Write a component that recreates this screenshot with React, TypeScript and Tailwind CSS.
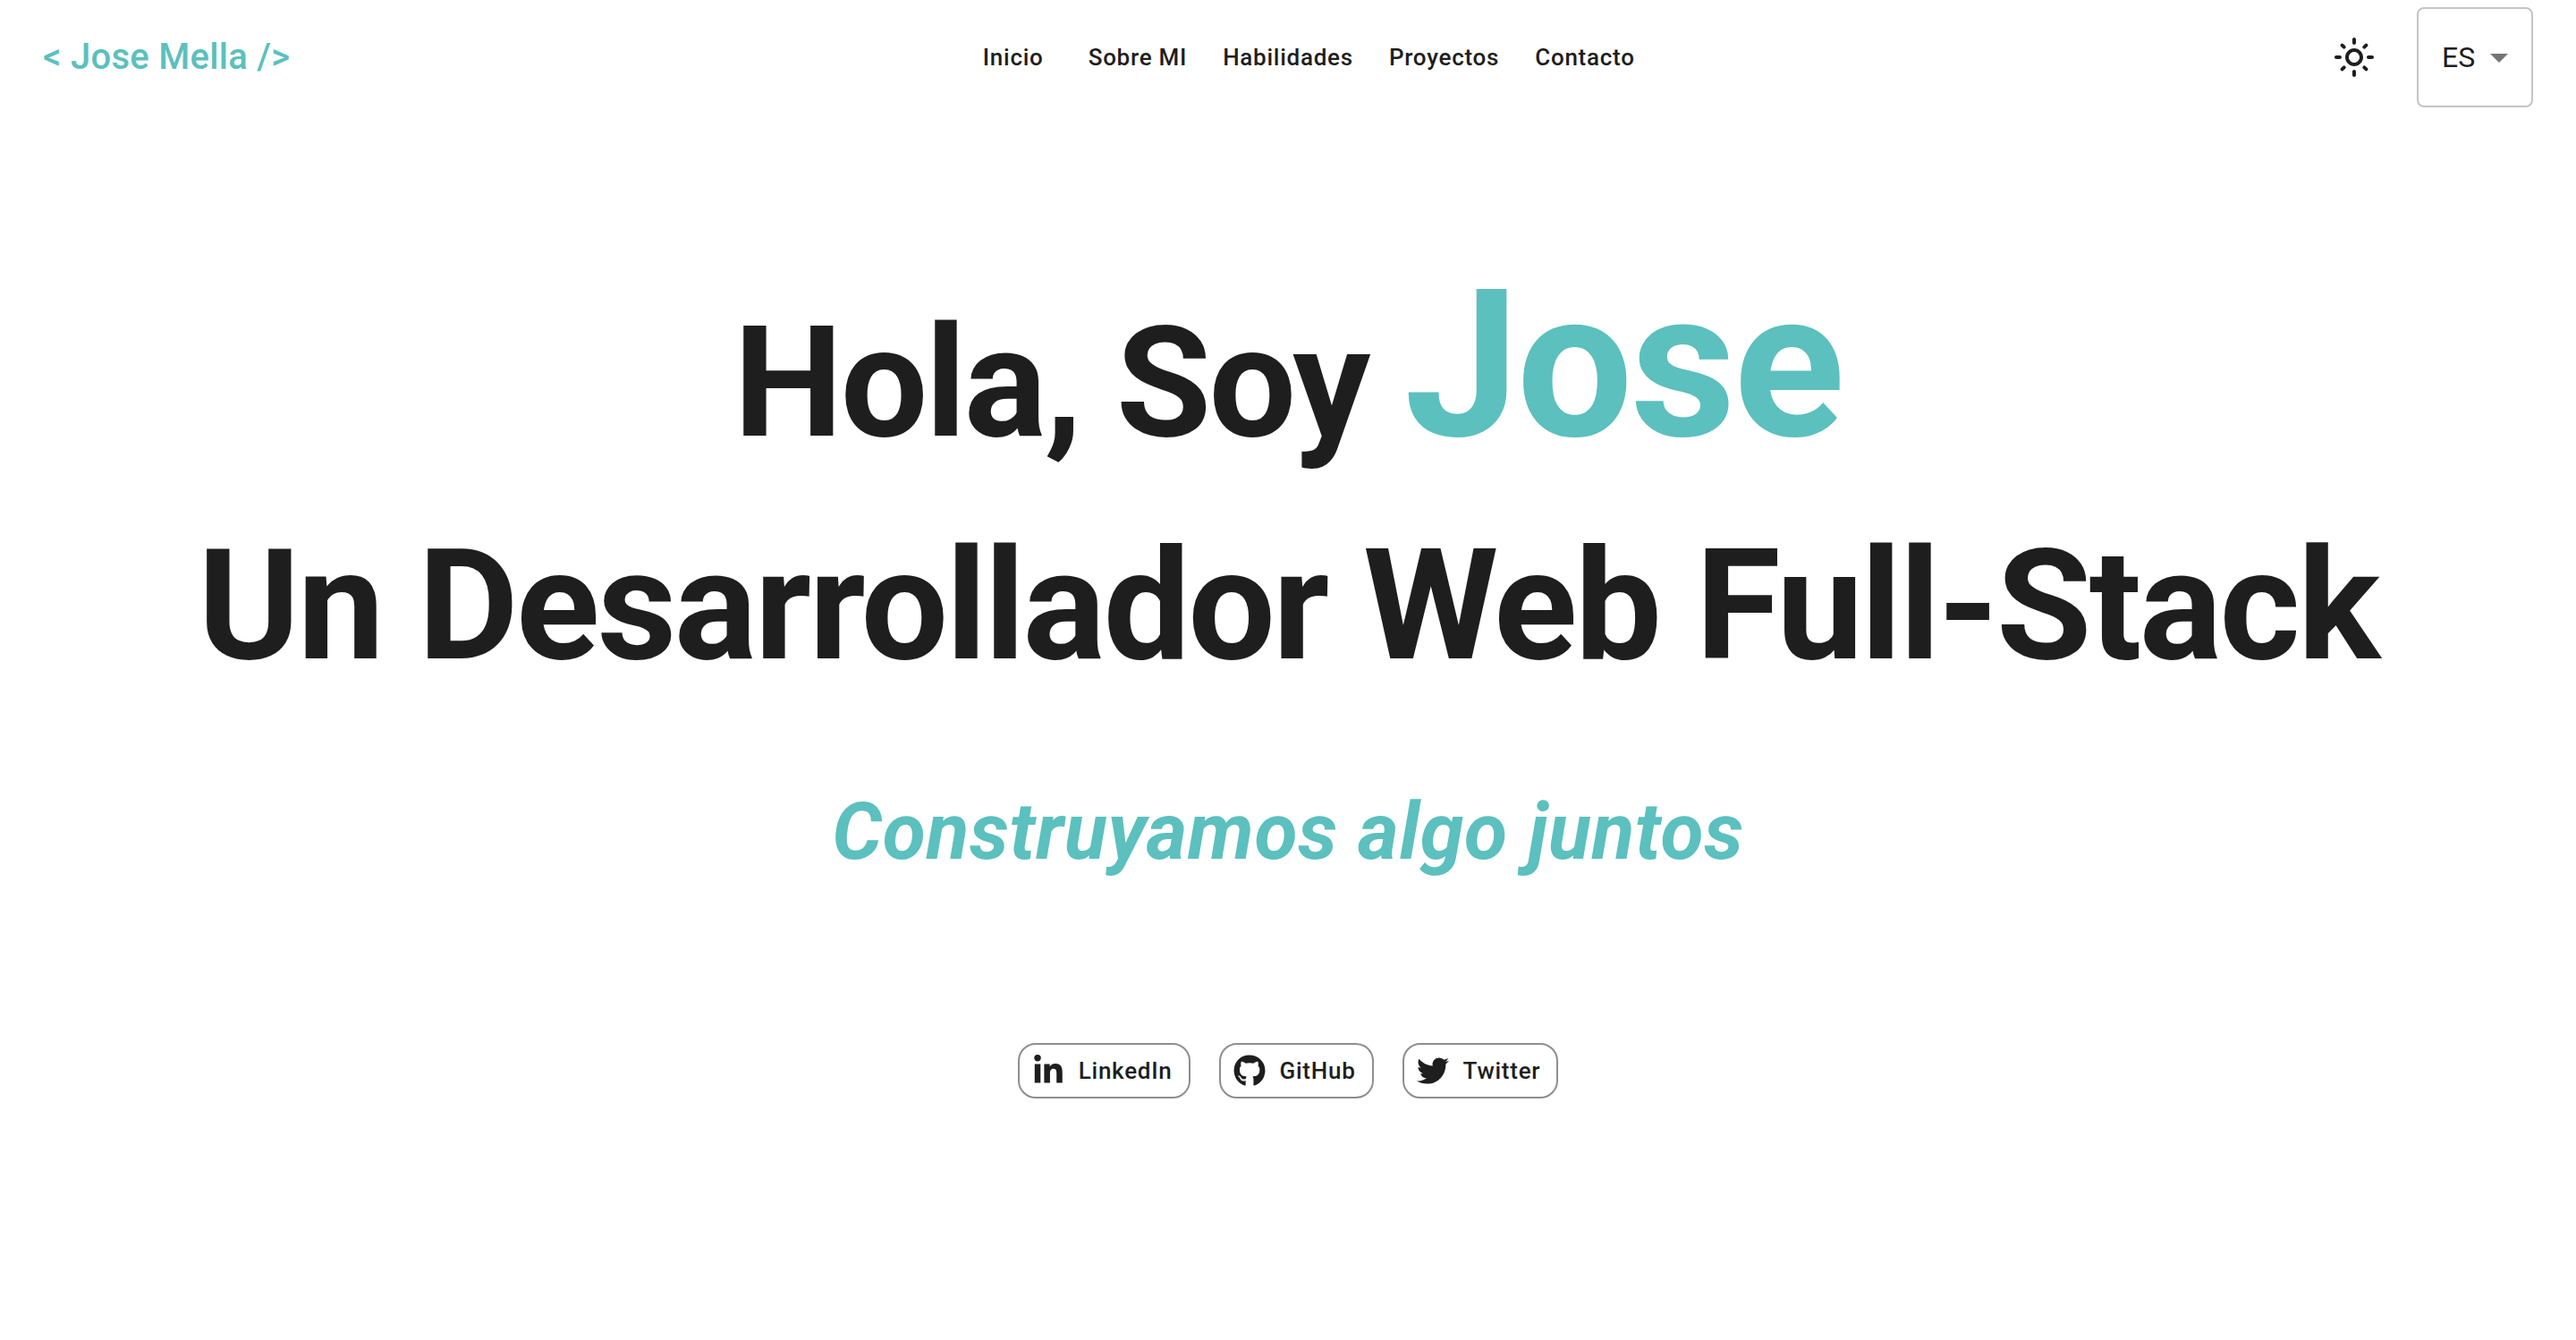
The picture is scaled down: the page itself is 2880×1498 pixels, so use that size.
import React from "react";
import { FaGithub, FaLinkedinIn, FaTwitter } from "react-icons/fa";
import { MdOutlineLightMode } from "react-icons/md";

const nav = ["Inicio", "Sobre MI", "Habilidades", "Proyectos", "Contacto"];

const socials = [
  { label: "LinkedIn", Icon: FaLinkedinIn },
  { label: "GitHub", Icon: FaGithub },
  { label: "Twitter", Icon: FaTwitter },
];

function LanguageSelect() {
  return (
    <div className="relative ml-[30px] h-28 w-[130px]">
      <select
        aria-label="Idioma"
        className="h-full w-full appearance-none rounded-lg border-2 border-[#c4c4c4] bg-transparent pl-[26px] text-[32px]"
      >
        <option>ES</option>
        <option>EN</option>
      </select>
      <svg
        viewBox="0 0 24 24"
        aria-hidden="true"
        className="pointer-events-none absolute top-8 right-3.5 h-12 w-12 fill-[#757575]"
      >
        <path d="M7 10l5 5 5-5z" />
      </svg>
    </div>
  );
}

export default function App() {
  return (
    <div className="min-h-screen bg-white font-['Roboto',sans-serif] text-[#1e1e1e]">
      <header className="flex items-center justify-between px-12 py-2">
        <a href="#inicio" className="text-[40px] font-medium tracking-[0.0075em] text-[#5bc0be]">
          {"< Jose Mella />"}
        </a>
        <nav className="flex">
          {nav.map((label) => (
            <button
              key={label}
              type="button"
              className="min-w-32 px-5 text-center text-[26px] font-medium tracking-[0.0286em]"
            >
              {label}
            </button>
          ))}
        </nav>
        <div className="flex items-center">
          <button type="button" aria-label="Cambiar tema" className="rounded-full p-4">
            <MdOutlineLightMode className="size-12" />
          </button>
          <LanguageSelect />
        </div>
      </header>
      <main className="flex flex-col items-center">
        <h1 className="pt-[156px] text-center text-[173px] leading-[249px] font-bold tracking-[-0.0156em]">
          Hola, Soy <span className="text-[230px] text-[#5bc0be]">Jose</span>
          <br />
          Un Desarrollador Web Full-Stack
        </h1>
        <p className="pt-[78px] text-[88px] leading-[100px] font-bold tracking-[0.0075em] text-[#5bc0be] italic">
          Construyamos algo juntos
        </p>
        <div className="flex gap-8 pt-[186px]">
          {socials.map(({ label, Icon }) => (
            <a
              key={label}
              href="#inicio"
              className="flex h-[62px] items-center gap-4 rounded-[20px] border-2 border-[#8e8e8e] pr-[18px] pl-3.5 text-[26px] font-medium tracking-[0.0286em]"
            >
              <Icon className="size-9" />
              {label}
            </a>
          ))}
        </div>
      </main>
    </div>
  );
}
